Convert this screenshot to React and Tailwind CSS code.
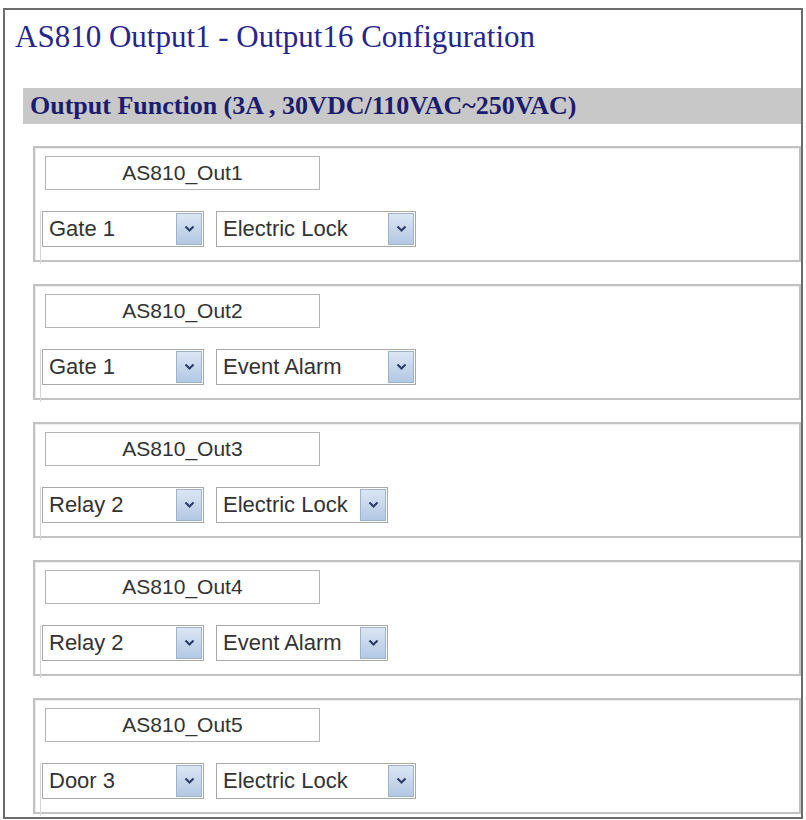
const outputs = [
  { name: "AS810_Out1", source: "Gate 1", fn: "Electric Lock", fnWidth: "w-[200px]" },
  { name: "AS810_Out2", source: "Gate 1", fn: "Event Alarm", fnWidth: "w-[200px]" },
  { name: "AS810_Out3", source: "Relay 2", fn: "Electric Lock", fnWidth: "w-[172px]" },
  { name: "AS810_Out4", source: "Relay 2", fn: "Event Alarm", fnWidth: "w-[172px]" },
  { name: "AS810_Out5", source: "Door 3", fn: "Electric Lock", fnWidth: "w-[200px]" },
];

function SelectBox({ value, className }) {
  return (
    <div
      className={`flex h-[36px] items-center justify-between border border-[#a8a8a8] bg-white pl-[6px] pr-[1px] ${className}`}
    >
      <span className="whitespace-nowrap text-[22px] leading-none text-[#333]">{value}</span>
      <span className="flex h-[32px] w-[26px] shrink-0 items-center justify-center border border-[#9fb2cc] bg-gradient-to-b from-[#dbe6f4] to-[#b3c8e3]">
        <svg width="11" height="8" viewBox="0 0 11 8">
          <path d="M1.5 1.5 L5.5 5.5 L9.5 1.5" fill="none" stroke="#2c3f66" strokeWidth="2.2" />
        </svg>
      </span>
    </div>
  );
}

function OutputBlock({ item }) {
  return (
    <div className="ml-[10px] mt-[22px] first:mt-[23px] h-[116px] border-2 border-[#c2c2c2] shadow-[inset_1px_1px_0_#ececec]">
      <div className="pl-[10px] pt-[8px]">
        <div className="flex h-[34px] w-[275px] items-center justify-center border border-[#b4b4b4] bg-white text-[21px] text-[#333]">
          {item.name}
        </div>
      </div>
      <div className="ml-[5px] mt-[21px] flex h-[53px] gap-[12px] border-l border-[#d6d6d6] pl-[1px]">
        <SelectBox value={item.source} className="w-[162px]" />
        <SelectBox value={item.fn} className={item.fnWidth} />
      </div>
    </div>
  );
}

export default function App() {
  return (
    <div className="h-[820px] w-[806px] overflow-hidden bg-white font-['Liberation_Sans',Arial,sans-serif]">
      <div className="ml-[3px] mt-[8px] h-[811px] w-[800px] overflow-hidden border-2 border-[#6c6c6c]">
        <h1 className="ml-[10px] mt-[9px] font-['Liberation_Serif','Times_New_Roman',serif] text-[31px] leading-[36px] text-[#25258c]">
          AS810 Output1 - Output16 Configuration
        </h1>
        <div className="ml-[18px] mt-[33px]">
          <div className="h-[36px] bg-[#c8c8c8] pl-[7px] font-['Liberation_Serif','Times_New_Roman',serif] text-[26px] font-bold leading-[36px] text-[#1c1c6e]">
            Output Function (3A , 30VDC/110VAC~250VAC)
          </div>
          {outputs.map((item) => (
            <OutputBlock key={item.name} item={item} />
          ))}
        </div>
      </div>
    </div>
  );
}
